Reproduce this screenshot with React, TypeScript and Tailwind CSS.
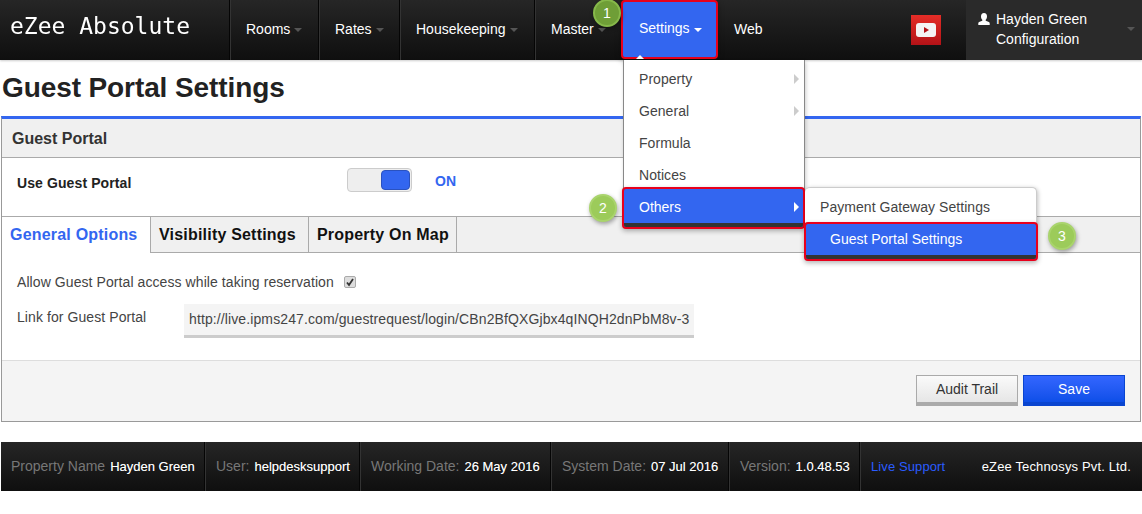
import React from 'react';

const NavItem: React.FC<{ label: string; caret?: boolean; width: string }> = ({ label, caret = true, width }) => (
  <div className={`${width} h-full flex items-center pl-4 pb-[2px] border-r border-r-[#050505] shadow-[1px_0_0_#333]`}>
    <span className="text-white text-[14px]">{label}</span>
    {caret && <span className="ml-[4px] mt-[2px] w-0 h-0 border-x-[4px] border-x-transparent border-t-[4px] border-t-[#555]" />}
  </div>
);

const Badge: React.FC<{ n: number; className: string }> = ({ n, className }) => (
  <div className={`absolute w-[28px] h-[28px] rounded-full flex items-center justify-center text-white text-[14px] shadow-[1px_2px_4px_rgba(0,0,0,0.35)] ${className}`}>
    {n}
  </div>
);

const MenuRow: React.FC<{ label: string; arrow?: boolean }> = ({ label, arrow }) => (
  <div className="h-[32px] flex items-center justify-between pl-[15px] pr-[5px] text-[14px] text-[#444] tracking-[0.05px]">
    <span>{label}</span>
    {arrow && <span className="w-0 h-0 border-y-[5px] border-y-transparent border-l-[5px] border-l-[#ccc]" />}
  </div>
);

const FooterCell: React.FC<{ label: string; value: string; width: string; pad?: string }> = ({ label, value, width, pad = 'pl-[11px]' }) => (
  <div className={`${width} h-full flex items-center ${pad} whitespace-nowrap border-r border-r-[#050505] shadow-[1px_0_0_#333]`}>
    <span className="text-[#777] text-[14px]">{label}</span>
    <span className="text-white text-[13px] ml-[5px] [text-shadow:0_0_0.5px_rgba(255,255,255,0.5)]">{value}</span>
  </div>
);

export default function App() {
  return (
    <div className="w-[1142px] h-[514px] bg-white overflow-hidden font-['Liberation_Sans',Arial,sans-serif]">
      {/* top bar */}
      <header className="relative z-20 h-[60px] flex bg-gradient-to-b from-[#262626] to-[#0f0f0f] shadow-[0_1px_2px_rgba(0,0,0,0.2)]">
        <div className="w-[230px] h-full flex items-center pl-[10px] pb-[8px] border-r border-r-[#050505] shadow-[1px_0_0_#333]">
          <span className="inline-block text-white text-[23px] font-['DejaVu_Sans_Mono',monospace] [-webkit-box-reflect:below_-12px_linear-gradient(transparent_70%,rgba(255,255,255,0.25))]">eZee Absolute</span>
        </div>
        <NavItem label="Rooms" width="w-[89px]" />
        <NavItem label="Rates" width="w-[81px]" />
        <NavItem label="Housekeeping" width="w-[135px]" />
        <div className="w-[88px] h-full flex items-center pl-4 pb-[2px]">
          <span className="text-white text-[14px]">Master</span>
          <span className="ml-[4px] mt-[2px] w-0 h-0 border-x-[4px] border-x-transparent border-t-[4px] border-t-[#555]" />
        </div>

        {/* open Settings item */}
        <div className="relative w-[96px] h-full">
          <div className="w-[97px] -ml-[2px] h-[59px] flex items-center pl-[16px] pb-[2px] bg-[#3366f0] border-2 border-[#e8001c] rounded-[4px] shadow-[0_2px_6px_rgba(0,0,0,0.3)]">
            <span className="text-white text-[14px]">Settings</span>
            <span className="ml-[4px] mt-[2px] w-0 h-0 border-x-[4px] border-x-transparent border-t-[4px] border-t-white" />
          </div>
          <span className="absolute left-[13px] top-[55px] w-0 h-0 border-x-[4px] border-x-transparent border-b-[4px] border-b-white" />

          <div className="absolute left-0 top-[60px] w-[182px] bg-white border-x border-x-[#888] shadow-[1px_2px_4px_rgba(0,0,0,0.2)]">
            <div className="h-[3px]" />
            <MenuRow label="Property" arrow />
            <MenuRow label="General" arrow />
            <MenuRow label="Formula" />
            <MenuRow label="Notices" />
          </div>

          {/* Others row */}
          <div className="absolute left-[-1px] top-[187px] w-[183px] h-[42px] rounded-[4px] border-2 border-[#e8001c] bg-[#3366f0] shadow-[0_2px_5px_rgba(0,0,0,0.3)]">
            <div className="h-[32px] mt-[2px] flex items-center justify-between pl-[15px] pr-[4px] text-white text-[14px]">
              <span>Others</span>
              <span className="w-0 h-0 border-y-[5px] border-y-transparent border-l-[5px] border-l-white" />
            </div>
            <div className="h-[4px] bg-[#333] rounded-b-[2px]" />
          </div>

          {/* submenu */}
          <div className="absolute left-[182px] top-[187px] w-[232px] h-[38px] bg-white rounded-t-[5px] border-t border-r border-[#ccc] shadow-[1px_1px_4px_rgba(0,0,0,0.25)]">
            <div className="h-[38px] pl-[15px] flex items-center text-[14px] text-[#444] tracking-[0.05px]">Payment Gateway Settings</div>
          </div>
          <div className="absolute left-[181px] top-[222px] w-[234px] h-[39px] rounded-[4px] border-2 border-[#e8001c] bg-[#3366f0] shadow-[0_2px_5px_rgba(0,0,0,0.3)]">
            <div className="h-[31px] flex items-center pl-[24px] text-white text-[14px]">Guest Portal Settings</div>
            <div className="h-[4px] bg-[#333] rounded-b-[2px]" />
          </div>
        </div>

        <div className="w-[247px] h-full flex items-center pl-[15px]">
          <span className="text-white text-[14px] pb-[2px]">Web</span>
          <div className="ml-auto mr-[25px] w-[30px] h-[30px] bg-gradient-to-b from-[#e52d27] to-[#b31217] flex items-center justify-center">
            <svg width="20" height="14" viewBox="0 0 20 14">
              <rect width="20" height="14" rx="3" fill="#f4f4f4" />
              <path d="M8 4l5 3-5 3z" fill="#b31217" />
            </svg>
          </div>
        </div>

        <div className="flex-1 h-full bg-[#2a2a2a] flex items-center text-white text-[14px] leading-[20px] pl-[11px] pb-[2px]">
          <svg width="14" height="14" viewBox="0 0 14 14" className="mb-[20px] mr-[5px] shrink-0" fill="#fff">
            <path d="M7 1c2 0 3 1.4 3 3.4 0 1.4-.6 2.6-1.3 3.3v1.1c1.6.5 4 1.1 4 2.4V13H1.300v-1.800c0-1.300 2.400-1.900 4-2.400V7.700C4.600 7 4 5.800 4 4.400 4 2.400 5 1 7 1z" />
          </svg>
          <div>
            <div>Hayden Green</div>
            <div>Configuration</div>
          </div>
          <span className="ml-auto mr-[7px] w-0 h-0 border-x-[4px] border-x-transparent border-t-[4px] border-t-[#555]" />
        </div>

        <Badge n={1} className="left-[593px] top-[-1px] bg-[#6f9e37] border-2 border-[#86b84a]" />
        <Badge n={2} className="left-[589px] top-[194px] bg-[#9ccb5a] border-2 border-[#a9d46c]" />
        <Badge n={3} className="left-[1048px] top-[222px] bg-[#9ccb5a] border-2 border-[#a9d46c]" />
      </header>

      {/* page title */}
      <h1 className="h-[56px] pl-[2px] flex items-center text-[28px] font-bold text-[#222] tracking-[-0.1px]">Guest Portal Settings</h1>

      {/* panel */}
      <section className="ml-[1px] w-[1140px] h-[306px] border-x border-b border-[#999] border-t-[3px] border-t-[#3366f0] flex flex-col">
        <div className="h-[39px] shrink-0 bg-[#f0f0f0] border-b border-b-[#aaa] pl-[10px] pt-[2px] flex items-center text-[16px] font-bold text-[#333]">
          Guest Portal
        </div>

        <div className="h-[59px] shrink-0 flex pl-[15px] pt-[10px] border-b border-b-[#aaa]">
          <div className="w-[330px] mt-[5px] text-[14px] font-bold text-[#222] tracking-[0.1px]">Use Guest Portal</div>
          <div className="w-[65px] h-[24px] rounded-[4px] bg-[#eee] border border-[#ccc] flex items-center justify-end pr-[1px]">
            <div className="w-[29px] h-[20px] rounded-[4px] bg-[#3366f0] border border-[#2a52c0]" />
          </div>
          <div className="ml-[23px] mt-[3px] text-[14px] font-bold text-[#3366f0]">ON</div>
        </div>

        {/* tabs */}
        <div className="h-[36px] shrink-0 flex bg-[#f0f0f0] border-b border-b-[#aaa] text-[16px] font-bold text-[#111] tracking-[0.2px]">
          <div className="w-[149px] h-[36px] bg-white border-r border-r-[#aaa] pl-[8px] flex items-center text-[#3366f0]">General Options</div>
          <div className="w-[158px] h-full border-r border-r-[#aaa] pl-[8px] flex items-center">Visibility Settings</div>
          <div className="w-[148px] h-full border-r border-r-[#aaa] pl-[8px] flex items-center">Property On Map</div>
        </div>

        <div className="h-[107px] shrink-0 pl-[15px] text-[14px] text-[#444] tracking-[0.08px]">
          <div className="h-[20px] mt-[19px] flex items-center">
            <span>Allow Guest Portal access while taking reservation</span>
            <span className="ml-[10px] w-[12px] h-[12px] rounded-[2px] bg-[#ddd] border border-[#aaa] flex items-center justify-center">
              <svg width="10" height="10" viewBox="0 0 10 10">
                <path d="M2 5.500l2 2.500 4-6" stroke="#333" strokeWidth="1.800" fill="none" />
              </svg>
            </span>
          </div>
          <div className="flex mt-[12px]">
            <span className="w-[167px] pt-[3px]">Link for Guest Portal</span>
            <div className="w-[510px] h-[34px] bg-[#f4f4f4] border-b-[3px] border-b-[#ccc] pl-[5px] flex items-center whitespace-nowrap overflow-hidden text-[#444] tracking-[0.11px]">
              http://live.ipms247.com/guestrequest/login/CBn2BfQXGjbx4qINQH2dnPbM8v-3
            </div>
          </div>
        </div>

        <div className="flex-1 bg-[#f4f4f4] border-t border-t-[#ddd] flex items-center justify-end gap-[5px] pr-[15px] pb-[1px] text-[14px]">
          <div className="w-[102px] h-[31px] flex items-center justify-center bg-gradient-to-b from-[#fafafa] to-[#e6e6e6] border border-[#aaa] border-b-[4px] text-[#333]">Audit Trail</div>
          <div className="w-[102px] h-[31px] flex items-center justify-center bg-gradient-to-b from-[#3366ff] to-[#0d4fe8] border border-[#0a45d0] border-b-[4px] text-white">Save</div>
        </div>
      </section>

      {/* footer bar */}
      <footer className="mt-[20px] ml-[1px] h-[49px] flex items-center bg-gradient-to-b from-[#262626] to-[#0f0f0f]">
        <FooterCell label="Property Name" value="Hayden Green" width="w-[204px]" pad="pl-[10px]" />
        <FooterCell label="User:" value="helpdesksupport" width="w-[155px]" />
        <FooterCell label="Working Date:" value="26 May 2016" width="w-[191px]" />
        <FooterCell label="System Date:" value="07 Jul 2016" width="w-[178px]" />
        <FooterCell label="Version:" value="1.0.48.53" width="w-[131px]" />
        <div className="pl-[11px] text-[13px] text-[#2a5cff] tracking-[0.1px]">Live Support</div>
        <div className="ml-auto pr-[11px] text-[13px] text-white tracking-[0.15px]">eZee Technosys Pvt. Ltd.</div>
      </footer>
    </div>
  );
}
